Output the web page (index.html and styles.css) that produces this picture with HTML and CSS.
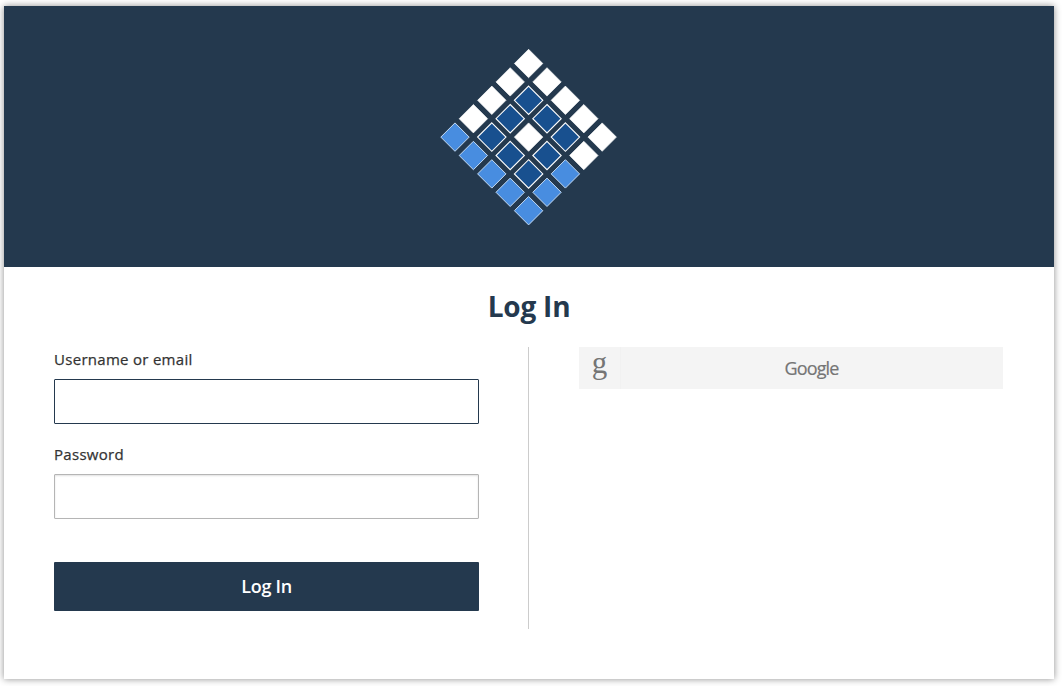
FILE: index.html
```html
<!DOCTYPE html>
<html lang="en">
<head>
<meta charset="utf-8">
<title>Log In</title>
<link rel="stylesheet" href="styles.css">
</head>
<body>
<main class="card">
  <header class="banner">
    <svg class="logo" width="178" height="178" viewBox="-88.6 -15.5 178 178" aria-hidden="true">
      <defs><path id="d" d="M0-14.2 14.2 0 0 14.2-14.2 0Z"/></defs>
      <g class="white">
        <use href="#d" x="0" y="0"/><use href="#d" x="18.4" y="18.4"/><use href="#d" x="36.8" y="36.8"/><use href="#d" x="55.2" y="55.2"/><use href="#d" x="73.6" y="73.6"/>
        <use href="#d" x="-18.4" y="18.4"/><use href="#d" x="-36.8" y="36.8"/><use href="#d" x="-55.2" y="55.2"/>
        <use href="#d" x="0" y="73.6"/><use href="#d" x="55.2" y="92"/>
      </g>
      <g class="dark">
        <use href="#d" x="0" y="36.8"/><use href="#d" x="18.4" y="55.2"/><use href="#d" x="36.8" y="73.6"/><use href="#d" x="-18.4" y="55.2"/>
        <use href="#d" x="-36.8" y="73.6"/><use href="#d" x="-18.4" y="92"/><use href="#d" x="18.4" y="92"/><use href="#d" x="0" y="110.4"/>
      </g>
      <g class="light">
        <use href="#d" x="-73.6" y="73.6"/><use href="#d" x="-55.2" y="92"/><use href="#d" x="-36.8" y="110.4"/><use href="#d" x="-18.4" y="128.8"/>
        <use href="#d" x="0" y="147.2"/><use href="#d" x="18.4" y="128.8"/><use href="#d" x="36.8" y="110.4"/>
      </g>
    </svg>
  </header>
  <h1 class="title">Log In</h1>
  <div class="columns">
    <form class="login">
      <label class="label" for="user">Username or email</label>
      <input class="field active" id="user" type="text">
      <label class="label second" for="pass">Password</label>
      <input class="field" id="pass" type="password">
      <button class="submit" type="button">Log In</button>
    </form>
    <div class="social">
      <a class="google"><span class="mark">g</span><span class="name">Google</span></a>
    </div>
  </div>
</main>
</body>
</html>
```
FILE: styles.css
```css
* { box-sizing: border-box; }
body {
  margin: 0;
  padding: 6px 8px 0 4px;
  height: 686px;
  overflow: hidden;
  background: #fff;
  font-family: "Open Sans", "Noto Sans", sans-serif;
}
.card {
  height: 673px;
  background: #fff;
  box-shadow: 0 0 7px rgba(0, 0, 0, .45);
}
.banner {
  height: 261px;
  padding: 42px 1px 0 0;
  display: flex;
  justify-content: center;
  background: #24394e;
}
.logo { display: block; }
.white { fill: #fff; stroke: #fff; stroke-width: .7; }
.dark { fill: #18508f; stroke: #fff; stroke-width: 1.1; }
.light { fill: #488de0; stroke: #c4dcf6; stroke-width: 1; }
.title {
  margin: 0;
  padding-top: 19px;
  height: 80px;
  text-align: center;
  font-size: 28px;
  line-height: 40px;
  font-weight: 700;
  letter-spacing: -.2px;
  color: #24394e;
}
.columns { display: flex; height: 282px; }
.login {
  width: 525px;
  padding: 0 50px;
  border-right: 1px solid #ccc;
  display: flex;
  flex-direction: column;
}
.label {
  height: 24px;
  margin-bottom: 8px;
  font-size: 15px;
  line-height: 24px;
  letter-spacing: .29px;
  -webkit-text-stroke: .25px #333;
  color: #333;
}
.second { margin-top: 18px; }
.field {
  flex: none;
  width: 425px;
  height: 45px;
  margin: 0;
  border: 1px solid #b5b5b5;
  border-radius: 1px;
  background: #fff;
  outline: none;
  box-shadow: inset 0 1px 2px rgba(0, 0, 0, .12);
}
.active { border-color: #24394e; box-shadow: none; }
.submit {
  width: 425px;
  height: 49px;
  margin-top: 43px;
  padding: 0 0 1px;
  border: 0;
  border-radius: 1px;
  background: #24394e;
  color: #fff;
  font-family: inherit;
  font-size: 18px;
  font-weight: 600;
  letter-spacing: -.3px;
}
.social { padding-left: 50px; }
.google {
  display: flex;
  width: 424px;
  height: 42px;
  background: #f4f4f4;
  color: #757575;
}
.mark {
  width: 42px;
  border-right: 1px solid #f1f1f1;
  text-align: center;
  font-family: "Liberation Serif", serif;
  font-size: 31px;
  line-height: 31px;
}
.name {
  flex: 1;
  padding-right: 1px;
  text-align: center;
  font-size: 18px;
  line-height: 42px;
  letter-spacing: -.9px;
  -webkit-text-stroke: .2px #757575;
}
```
